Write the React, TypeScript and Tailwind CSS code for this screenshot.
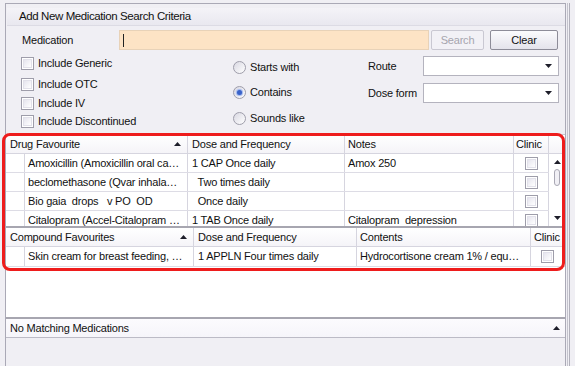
import React from 'react';

const font = { fontFamily: '"Liberation Sans", Arial, sans-serif' };

const Check: React.FC = () => (
  <span className="inline-block w-[13px] h-[13px] border border-[#9e9daa] bg-white p-px shrink-0">
    <span className="block w-full h-full border border-[#e2e1ea] bg-gradient-to-br from-[#e6e5ee] to-white" />
  </span>
);

const Radio: React.FC<{ on?: boolean }> = ({ on }) => (
  <span className="inline-flex items-center justify-center w-[13px] h-[13px] rounded-full border border-[#9e9daa] bg-gradient-to-br from-[#d9d8e2] to-white shrink-0">
    {on ? <span className="w-[5px] h-[5px] rounded-full bg-[#3a63c9] shadow-[0_0_1px_1px_#9db4ee]" /> : null}
  </span>
);

const Arrow: React.FC<{ up?: boolean }> = ({ up }) => (
  <svg width="7" height="4" viewBox="0 0 7 4" className="shrink-0">
    {up ? <path d="M0 4 L3.5 0 L7 4 Z" fill="#1e1e2a" /> : <path d="M0 0 L7 0 L3.5 4 Z" fill="#1e1e2a" />}
  </svg>
);

const SelectBox: React.FC = () => (
  <div className="w-[136px] h-[20px] border border-[#b4b3be] bg-white flex items-center justify-end pr-[6px]">
    <Arrow />
  </div>
);

const drugRows = [
  ['Amoxicillin (Amoxicillin oral ca…', '1 CAP Once daily', 'Amox 250'],
  ['beclomethasone (Qvar inhala…', '  Two times daily', ''],
  ['Bio gaia  drops   v PO  OD', '  Once daily', ''],
  ['Citalopram (Accel-Citalopram …', '1 TAB Once daily', 'Citalopram  depression'],
];

const App: React.FC = () => {
  return (
    <div className="w-[575px] h-[366px] bg-[#f0eff4] overflow-hidden relative text-[11px] tracking-[-0.2px] text-[#111]" style={font}>
      <div className="flex h-full pt-[3px]">
        <div className="ml-[5px] w-[561px] h-full border-l border-t border-r border-[#aaa9b6] flex flex-col">
          {/* title */}
          <div className="mt-[4px] ml-px h-[18px] bg-gradient-to-b from-[#f4f3f8] to-[#e9e8ef] border-b border-[#dcdbe4] flex items-center pl-[12px] text-[11.5px] tracking-[-0.4px]">
            Add New Medication Search Criteria
          </div>

          {/* medication row */}
          <div className="flex items-center h-[20px] mt-[4px]">
            <span className="ml-[16px] w-[97px]">Medication</span>
            <div className="w-[310px] h-[20px] bg-[#fde3c5] border border-[#e8d2b8] flex items-center pl-[3px]">
              <span className="w-px h-[13px] bg-[#222]" />
            </div>
            <div className="ml-[2px] w-[53px] h-[20px] border border-[#c9c8d2] rounded-[2px] bg-[#f2f1f6] flex items-center justify-center text-[#a6a5ae]">
              Search
            </div>
            <div className="ml-[6px] w-[68px] h-[20px] border border-[#8d8c98] rounded-[2px] bg-gradient-to-b from-[#fbfbfd] to-[#e4e3eb] flex items-center justify-center">
              Clear
            </div>
          </div>

          {/* options */}
          <div className="flex h-[83px]">
            <div className="ml-[15px] w-[212px] flex flex-col pt-[7px]">
              <div className="flex items-center gap-[4px] h-[13px]"><Check />Include Generic</div>
              <div className="flex items-center gap-[4px] h-[13px] mt-[8px]"><Check />Include OTC</div>
              <div className="flex items-center gap-[4px] h-[13px] mt-[6px]"><Check />Include IV</div>
              <div className="flex items-center gap-[4px] h-[13px] mt-[5px]"><Check />Include Discontinued</div>
            </div>
            <div className="w-[135px] flex flex-col pt-[10px]">
              <div className="flex items-center gap-[4px] h-[14px]"><Radio />Starts with</div>
              <div className="flex items-center gap-[4px] h-[14px] mt-[11px]"><Radio on />Contains</div>
              <div className="flex items-center gap-[4px] h-[14px] mt-[12px]"><Radio />Sounds like</div>
            </div>
            <div className="flex flex-col pt-[6px]">
              <div className="flex items-center h-[20px]">
                <span className="w-[55px]">Route</span>
                <SelectBox />
              </div>
              <div className="flex items-center h-[20px] mt-[7px]">
                <span className="w-[55px]">Dose form</span>
                <SelectBox />
              </div>
            </div>
          </div>

          {/* grids */}
          <div className="mt-[1px] bg-white border-t border-[#c9c8d2] flex flex-col">
            {/* drug header */}
            <div className="flex h-[19px] border-b border-[#d6d5df] bg-gradient-to-b from-white to-[#f5f4f8]">
              <div className="w-[182px] pl-[4px] flex items-center justify-between pr-[6px] border-r border-[#d6d5df]">
                <span>Drug Favourite</span><Arrow up />
              </div>
              <div className="w-[157px] pl-[4px] flex items-center border-r border-[#d6d5df]">Dose and Frequency</div>
              <div className="w-[169px] pl-[3px] flex items-center border-r border-[#d6d5df]">Notes</div>
              <div className="w-[35px] pl-[2px] flex items-center border-r border-[#d6d5df]">Clinic</div>
              <div className="flex-1" />
            </div>
            <div className="flex h-[72px] overflow-hidden">
              <div className="w-[543px] flex flex-col">
                {drugRows.map((r, i) => (
                  <div key={i} className="flex h-[19px] shrink-0 border-b border-[#dddce5]">
                    <div className="w-[19px] border-r border-[#d6d5df]" />
                    <div className="w-[163px] pl-[3px] flex items-center border-r border-[#d6d5df] whitespace-pre overflow-hidden">{r[0]}</div>
                    <div className="w-[157px] pl-[4px] flex items-center border-r border-[#d6d5df] whitespace-pre">{r[1]}</div>
                    <div className="w-[169px] pl-[3px] flex items-center border-r border-[#d6d5df] whitespace-pre">{r[2]}</div>
                    <div className="w-[35px] flex items-center justify-center border-r border-[#d6d5df]">
                      <Check />
                    </div>
                  </div>
                ))}
              </div>
              <div className="flex-1 flex flex-col items-center justify-between py-[6px]">
                <Arrow up />
                <div className="w-[6px] h-[17px] -mt-[26px] rounded-[3px] border border-[#a9a8b4] bg-[#f1f0f5]" />
                <Arrow />
              </div>
            </div>
            <div className="h-[2px] bg-[#a7a6b0]" />
            {/* compound header */}
            <div className="flex h-[19px] border-b border-[#d6d5df] bg-gradient-to-b from-white to-[#f5f4f8]">
              <div className="w-[188px] pl-[4px] flex items-center justify-between pr-[6px] border-r border-[#d6d5df]">
                <span>Compound Favourites</span><Arrow up />
              </div>
              <div className="w-[163px] pl-[4px] flex items-center border-r border-[#d6d5df]">Dose and Frequency</div>
              <div className="w-[174px] pl-[3px] flex items-center border-r border-[#d6d5df]">Contents</div>
              <div className="flex-1 pl-[3px] flex items-center">Clinic</div>
            </div>
            <div className="flex h-[20px] border-b border-[#dddce5]">
              <div className="w-[19px] border-r border-[#d6d5df]" />
              <div className="w-[169px] pl-[3px] flex items-center border-r border-[#d6d5df] whitespace-pre overflow-hidden">Skin cream for breast feeding, …</div>
              <div className="w-[163px] pl-[4px] flex items-center border-r border-[#d6d5df]">1 APPLN Four times daily</div>
              <div className="w-[174px] pl-[3px] flex items-center border-r border-[#d6d5df] whitespace-pre">Hydrocortisone cream 1% / equ…</div>
              <div className="flex-1 flex items-center justify-center pr-[2px]"><Check /></div>
            </div>
            <div className="h-[50px]" />
          </div>

          {/* status */}
          <div className="h-[2px] bg-[#a7a6b0]" />
          <div className="h-[19px] bg-gradient-to-b from-[#fcfbfe] to-[#f6f5fa] border-b border-[#bcbbc6] flex items-center justify-between pl-[4px] pr-[5px]">
            <span>No Matching Medications</span>
            <Arrow up />
          </div>
          <div className="flex-1" />
        </div>
        <div className="ml-[1px] w-[2px] h-full border-l border-[#c4c3cd]" />
        <div className="w-[2px] h-full border-l border-[#b1b0bb]" />
      </div>

      {/* red highlight */}
      <div className="absolute left-[2px] top-[133px] w-[563px] h-[138px] border-[3px] border-[#ee1c1c] rounded-[8px] pointer-events-none" />
    </div>
  );
};

export default App;
